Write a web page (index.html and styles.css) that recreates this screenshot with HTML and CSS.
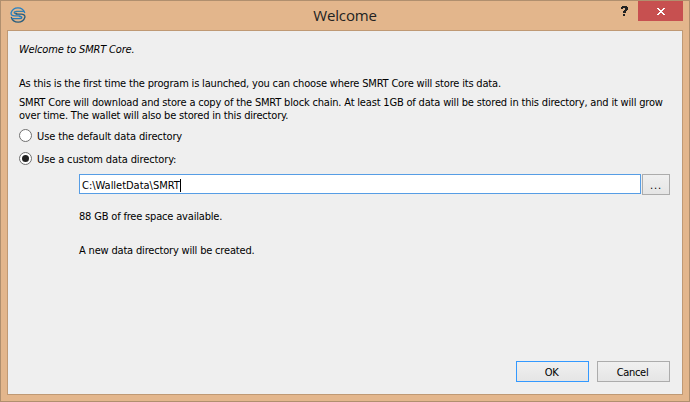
FILE: index.html
```
<!DOCTYPE html>
<html lang="en">
<head>
<meta charset="utf-8">
<title>Welcome</title>
<link rel="stylesheet" href="styles.css">
</head>
<body>
<div class="window">
  <header class="titlebar">
    <svg class="logo" viewBox="0 0 16 16" fill="none" stroke-width="1.3">
      <path d="M14.800 6A7.200 7.200 0 0 0 1 6c0 1.800 1.500 2.900 3.800 2.900H9.500" stroke="#2580c5"/>
      <path d="M14.300 4.300H6.500C3.500 4.300 3.500 6.500 6 6.500" stroke="#347fab"/>
      <path d="M1.200 10A7.200 7.200 0 0 0 15 10c0-1.800-1.500-2.900-3.800-2.900H6.500" stroke="#285d7d"/>
      <path d="M1.700 11.700H9.500c3 0 3-2.200.5-2.200" stroke="#2879b4"/>
      <circle cx="6.300" cy="6.700" r="1" fill="#285d7d"/>
      <circle cx="9.700" cy="9.300" r="1" fill="#2580c5"/>
    </svg>
    <h1 class="title">Welcome</h1>
    <div class="help"><svg width="7" height="11" viewBox="0 0 7 11" shape-rendering="crispEdges"><path d="M1 0h5v1h1v3H6v1H5v2H2V5h1V4h1V2H2v1H0V1h1zM2 8h2v2H2z" fill="#222"/></svg></div>
    <div class="close"><svg width="8" height="7" viewBox="0 0 8 7" shape-rendering="crispEdges"><path d="M0 0h2v1h1v1h2V1h1V0h2v1H7v1H6v1H5v1h1v1h1v1h1v1H6V6H5V5H3v1H2v1H0V6h1V5h1V4h1V3H2V2H1V1H0z" fill="#fff"/></svg></div>
  </header>
  <main class="content">
    <p class="heading">Welcome to SMRT Core.</p>
    <p class="intro">As this is the first time the program is launched, you can choose where SMRT Core will store its data.</p>
    <p class="about">SMRT Core will download and store a copy of the SMRT block chain. At least 1GB of data will be stored in this directory, and it will grow<br>over time. The wallet will also be stored in this directory.</p>
    <div class="option"><i class="radio"></i><span>Use the default data directory</span></div>
    <div class="option"><i class="radio checked"></i><span>Use a custom data directory:</span></div>
    <div class="custom">
      <div class="path-row">
        <div class="path"><span>C:\WalletData\SMRT</span><i class="caret"></i></div>
        <div class="button browse"><span>...</span></div>
      </div>
      <p class="space">88 GB of free space available.</p>
      <p class="status">A new data directory will be created.</p>
    </div>
    <footer class="actions">
      <div class="button primary"><span>OK</span></div>
      <div class="button"><span>Cancel</span></div>
    </footer>
  </main>
</div>
</body>
</html>
```
FILE: styles.css
```
* { box-sizing: border-box; }
body { margin: 0; font: 11px/13px "DejaVu Sans Condensed", "DejaVu Sans", sans-serif; font-stretch: condensed; color: #000; letter-spacing: -0.18px; }
p, h1 { margin: 0; white-space: nowrap; }
.window { width: 690px; height: 402px; padding: 0 6px 6px; display: flex; flex-direction: column; background: #e3b68c; border: 1px solid #b08f6e; }
.titlebar { height: 29px; display: grid; grid-template-columns: 1fr auto 1fr; align-items: start; flex: none; }
.logo { width: 16px; height: 16px; margin: 6px 0 0 3px; grid-area: 1 / 1; }
.title { grid-area: 1 / 2; font: 15px/20px "Open Sans", sans-serif; letter-spacing: -0.15px; color: #222; padding-top: 4px; }
.help { grid-area: 1 / 3; justify-self: end; margin: 5px 55px 0 0; height: 11px; display: flex; }
.close { grid-area: 1 / 3; justify-self: end; width: 45px; height: 20px; background: #c75050; display: flex; align-items: center; justify-content: center; padding-top: 1px; }
.content { flex: 1; background: #efefef; border: 1px solid #bf9974; padding: 12px 12px 12px 11px; display: flex; flex-direction: column; }
.heading { font-style: italic; }
.intro { margin-top: 21px; }
.about { margin-top: 6px; }
.option { display: flex; align-items: center; gap: 5px; height: 13px; margin-top: 7px; letter-spacing: -0.12px; }
.option span { padding-top: 2px; }
.option + .option { margin-top: 10px; }
.radio { width: 13px; height: 13px; border: 1px solid #707070; border-radius: 50%; background: #fff; display: flex; align-items: center; justify-content: center; }
.checked::after { content: ""; width: 7px; height: 7px; border-radius: 50%; background: #222; }
.custom { margin: 9px 0 0 60px; }
.path-row { display: flex; gap: 1px; align-items: flex-start; }
.path { flex: 1; height: 20px; background: #fff; border: 1px solid #569de5; display: flex; align-items: center; padding: 2px 0 0 2px; letter-spacing: -0.02px; }
.caret { width: 1px; height: 13px; background: #000; }
.button { width: 73px; height: 21px; border: 1px solid #acacac; background: linear-gradient(#f0f0f0, #e5e5e5); display: flex; align-items: center; justify-content: center; padding: 1px 2px 0 0; letter-spacing: -0.3px; }
.browse { width: 28px; padding: 2px 0 0; letter-spacing: 0.9px; }
.primary { border-color: #3399ff; }
.space { margin-top: 15px; }
.status { margin-top: 21px; }
.actions { display: flex; justify-content: flex-end; gap: 8px; margin-top: auto; }
```
